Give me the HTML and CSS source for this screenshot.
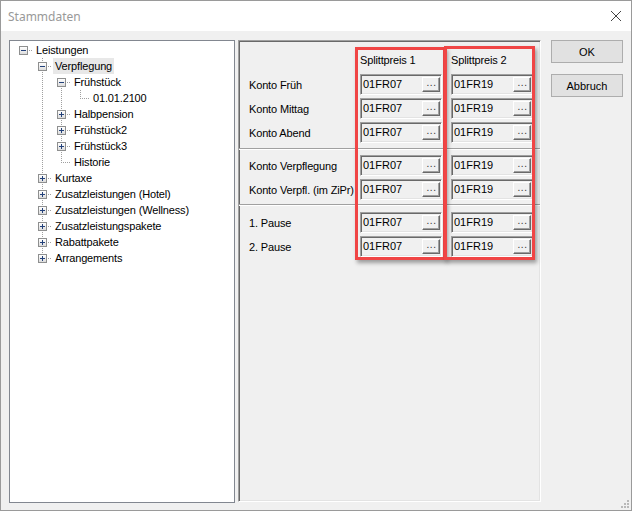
FILE: index.html
```html
<!DOCTYPE html>
<html lang="de">
<head>
    <meta charset="UTF-8">
    <title>Stammdaten</title>
    <link rel="stylesheet" href="styles.css">
</head>
<body>
<div class="window">
    <div class="titlebar">
        <span class="title">Stammdaten</span>
        <svg class="close" width="12" height="12" viewBox="0 0 12 12">
            <path d="M1 1L11 11M11 1L1 11" stroke="#444" stroke-width="1" fill="none"/>
        </svg>
    </div>

    <div class="content">
        <!-- tree -->
        <div class="tree">
            <div class="node"><span class="cell h"><span class="exp"></span></span><span class="label">Leistungen</span></div>
            <div class="node"><span class="cell"></span><span class="cell v h"><span class="exp"></span></span><span class="label selected">Verpflegung</span></div>
            <div class="node"><span class="cell"></span><span class="cell v"></span><span class="cell vb h"><span class="exp"></span></span><span class="label">Frühstück</span></div>
            <div class="node"><span class="cell"></span><span class="cell v"></span><span class="cell v"></span><span class="cell vt h"></span><span class="label">01.01.2100</span></div>
            <div class="node"><span class="cell"></span><span class="cell v"></span><span class="cell v h"><span class="exp plus"></span></span><span class="label">Halbpension</span></div>
            <div class="node"><span class="cell"></span><span class="cell v"></span><span class="cell v h"><span class="exp plus"></span></span><span class="label">Frühstück2</span></div>
            <div class="node"><span class="cell"></span><span class="cell v"></span><span class="cell v h"><span class="exp plus"></span></span><span class="label">Frühstück3</span></div>
            <div class="node"><span class="cell"></span><span class="cell v"></span><span class="cell vt h"></span><span class="label">Historie</span></div>
            <div class="node"><span class="cell"></span><span class="cell v h"><span class="exp plus"></span></span><span class="label">Kurtaxe</span></div>
            <div class="node"><span class="cell"></span><span class="cell v h"><span class="exp plus"></span></span><span class="label">Zusatzleistungen (Hotel)</span></div>
            <div class="node"><span class="cell"></span><span class="cell v h"><span class="exp plus"></span></span><span class="label">Zusatzleistungen (Wellness)</span></div>
            <div class="node"><span class="cell"></span><span class="cell v h"><span class="exp plus"></span></span><span class="label">Zusatzleistungspakete</span></div>
            <div class="node"><span class="cell"></span><span class="cell v h"><span class="exp plus"></span></span><span class="label">Rabattpakete</span></div>
            <div class="node"><span class="cell"></span><span class="cell vt h"><span class="exp plus"></span></span><span class="label">Arrangements</span></div>
        </div>

        <!-- accounts -->
        <div class="panel">
            <div class="row head">
                <span></span>
                <span>Splittpreis 1</span>
                <span>Splittpreis 2</span>
            </div>

            <div class="row">
                <span class="lbl">Konto Früh</span>
                <div class="field"><span>01FR07</span><span class="pick">...</span></div>
                <div class="field"><span>01FR19</span><span class="pick">...</span></div>
            </div>
            <div class="row">
                <span class="lbl">Konto Mittag</span>
                <div class="field"><span>01FR07</span><span class="pick">...</span></div>
                <div class="field"><span>01FR19</span><span class="pick">...</span></div>
            </div>
            <div class="row">
                <span class="lbl">Konto Abend</span>
                <div class="field"><span>01FR07</span><span class="pick">...</span></div>
                <div class="field"><span>01FR19</span><span class="pick">...</span></div>
            </div>

            <div class="sep sep-1"></div>

            <div class="row">
                <span class="lbl">Konto Verpflegung</span>
                <div class="field"><span>01FR07</span><span class="pick">...</span></div>
                <div class="field"><span>01FR19</span><span class="pick">...</span></div>
            </div>
            <div class="row">
                <span class="lbl">Konto Verpfl. (im ZiPr)</span>
                <div class="field"><span>01FR07</span><span class="pick">...</span></div>
                <div class="field"><span>01FR19</span><span class="pick">...</span></div>
            </div>

            <div class="sep sep-2"></div>

            <div class="row">
                <span class="lbl">1. Pause</span>
                <div class="field"><span>01FR07</span><span class="pick">...</span></div>
                <div class="field"><span>01FR19</span><span class="pick">...</span></div>
            </div>
            <div class="row">
                <span class="lbl">2. Pause</span>
                <div class="field"><span>01FR07</span><span class="pick">...</span></div>
                <div class="field"><span>01FR19</span><span class="pick">...</span></div>
            </div>

            <!-- highlight marks -->
            <div class="mark mark-1"></div>
            <div class="mark mark-2"></div>
        </div>

        <div class="buttons">
            <button class="btn">OK</button>
            <button class="btn">Abbruch</button>
        </div>
    </div>

    <svg class="grip" width="10" height="10" viewBox="0 0 10 10">
        <rect x="7" y="1" width="2" height="2" fill="#b8b8b8"/>
        <rect x="4" y="4" width="2" height="2" fill="#b8b8b8"/>
        <rect x="7" y="4" width="2" height="2" fill="#b8b8b8"/>
        <rect x="1" y="7" width="2" height="2" fill="#b8b8b8"/>
        <rect x="4" y="7" width="2" height="2" fill="#b8b8b8"/>
        <rect x="7" y="7" width="2" height="2" fill="#b8b8b8"/>
    </svg>
</div>
</body>
</html>
```

FILE: styles.css
```css
html, body {
    margin: 0;
    padding: 0;
    background: #f0f0f0;
}

.window {
    position: relative;
    box-sizing: border-box;
    width: 632px;
    height: 511px;
    border: 1px solid #9a9a9a;
    background: #f0f0f0;
    font-family: "Liberation Sans", Arial, sans-serif;
    font-size: 11px;
    letter-spacing: -0.15px;
    color: #000;
}

.titlebar {
    height: 30px;
    background: #fff;
    display: flex;
    align-items: center;
    justify-content: space-between;
    padding: 0 9px 0 7px;
}

.title {
    font-family: "Noto Sans", "Open Sans", sans-serif;
    font-size: 12px;
    letter-spacing: 0;
    color: #999;
}

.content {
    display: flex;
    padding: 9px 0 0 8px;
}

/* tree */
.tree {
    box-sizing: border-box;
    width: 226px;
    height: 463px;
    background: #fff;
    border: 1px solid #828790;
    padding: 1px 0 0 4px;
}

.node {
    display: flex;
    height: 16px;
    align-items: center;
}

.cell {
    --v: none;
    --h: none;
    --vy: 0px;
    --vh: 16px;
    flex: none;
    width: 19px;
    height: 16px;
    display: flex;
    align-items: center;
    justify-content: center;
    background-image: var(--v), var(--h);
    background-repeat: no-repeat;
    background-position: 9px var(--vy), 9px 8px;
    background-size: 1px var(--vh), 10px 1px;
}

.v, .vt, .vb {
    --v: repeating-linear-gradient(to bottom, #a0a0a0 0 1px, transparent 1px 2px);
}

.vt { --vh: 8px; }
.vb { --vy: 8px; --vh: 8px; }

.h {
    --h: repeating-linear-gradient(to right, #a0a0a0 0 1px, transparent 1px 2px);
}

.exp {
    box-sizing: border-box;
    width: 9px;
    height: 9px;
    margin-top: 1px;
    border: 1px solid #8e8f8f;
    background:
        linear-gradient(#23417a, #23417a) no-repeat 1px 3px / 5px 1px,
        linear-gradient(#fff, #dcdcdc);
}

.exp.plus {
    background:
        linear-gradient(#23417a, #23417a) no-repeat 1px 3px / 5px 1px,
        linear-gradient(#23417a, #23417a) no-repeat 3px 1px / 1px 5px,
        linear-gradient(#fff, #dcdcdc);
}

.label {
    margin-left: 1px;
    padding: 0 2px;
    line-height: 16px;
    white-space: nowrap;
}

.label.selected {
    background: #e8e8e8;
}

/* panel with account fields */
.panel {
    position: relative;
    box-sizing: border-box;
    width: 303px;
    height: 462px;
    margin-left: 3px;
    border: 1px solid;
    border-color: #a0a0a0 #fff #fff #a0a0a0;
    box-shadow: inset 1px 1px #696969, inset -1px -1px #e3e3e3;
}

.row {
    display: grid;
    grid-template-columns: 102px 82px 82px;
    column-gap: 9px;
    align-items: center;
    height: 21px;
    margin-bottom: 3px;
    padding-left: 10px;
}

.row.head {
    height: 13px;
    margin: 12px 0 8px;
}

.lbl {
    white-space: nowrap;
}

.field {
    box-sizing: border-box;
    height: 21px;
    display: flex;
    align-items: flex-start;
    justify-content: space-between;
    padding: 2px 1px 0 2px;
    border: 1px solid;
    border-color: #a0a0a0 #fff #fff #a0a0a0;
    box-shadow: inset 1px 1px #696969, inset -1px -1px #e3e3e3;
    background: #f0f0f0;
    letter-spacing: 0;
}

.field span:first-child {
    line-height: 15px;
}

.pick {
    box-sizing: border-box;
    width: 18px;
    height: 15px;
    border: 1px solid;
    border-color: #fff #696969 #696969 #fff;
    box-shadow: inset -1px -1px #a0a0a0;
    background: #f0f0f0;
    text-align: center;
    font-size: 10px;
    line-height: 10px;
    letter-spacing: 0.5px;
    padding-left: 1px;
    color: #333;
}

.sep {
    border-top: 1px solid #a0a0a0;
    border-bottom: 1px solid #fff;
}

/* row margins collapse into these */
.sep-1 { margin: 5px 0 5px; }
.sep-2 { margin: 4px 0 6px; }

.mark {
    position: absolute;
    box-sizing: border-box;
    border: 3px solid #f04545;
    box-shadow: 2px 3px 4px rgba(0, 0, 0, 0.35);
}

.mark-1 {
    left: 116px;
    top: 6px;
    width: 91px;
    height: 213px;
}

.mark-2 {
    left: 205px;
    top: 5px;
    width: 91px;
    height: 214px;
}

/* buttons */
.buttons {
    display: flex;
    flex-direction: column;
    gap: 11px;
    margin-left: 10px;
}

.btn {
    width: 72px;
    height: 23px;
    border: 1px solid #adadad;
    background: #e1e1e1;
    font-family: "Liberation Sans", Arial, sans-serif;
    font-size: 11px;
    color: #000;
    padding: 0;
}

.grip {
    position: absolute;
    right: 1px;
    bottom: 1px;
}
```
